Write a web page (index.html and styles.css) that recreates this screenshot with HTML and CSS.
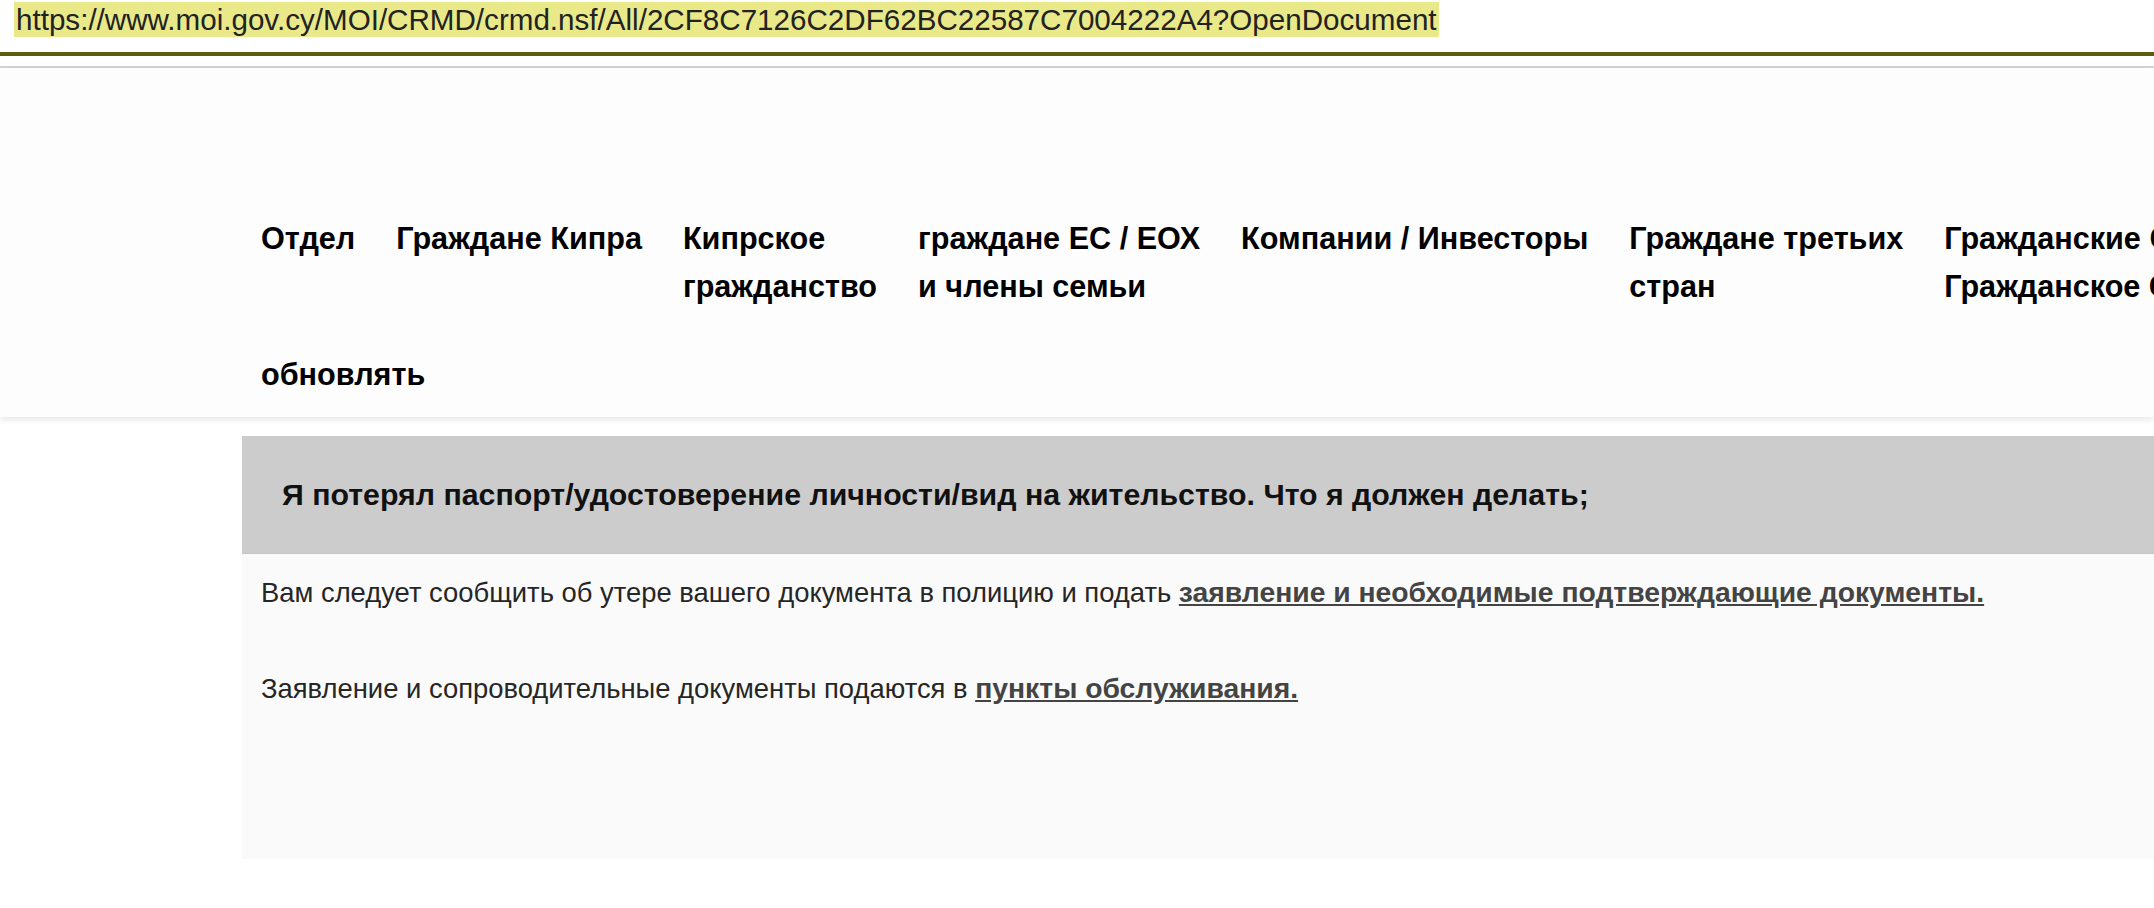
FILE: index.html
```html
<!DOCTYPE html>
<html lang="ru">
<head>
<meta charset="utf-8">
<title>moi.gov.cy</title>
<link rel="stylesheet" href="styles.css">
</head>
<body>
<div class="urlbar"><span class="url">https://www.moi.gov.cy/MOI/CRMD/crmd.nsf/All/2CF8C7126C2DF62BC22587C7004222A4?OpenDocument</span></div>
<div class="rule-olive"></div>
<div class="rule-gray"></div>
<header class="site-header">
  <nav class="nav">
    <ul class="nav-row">
      <li class="nav-item">Отдел</li>
      <li class="nav-item">Граждане Кипра</li>
      <li class="nav-item">Кипрское<br>гражданство</li>
      <li class="nav-item">граждане ЕС / ЕОХ<br>и члены семьи</li>
      <li class="nav-item">Компании / Инвесторы</li>
      <li class="nav-item">Граждане третьих<br>стран</li>
      <li class="nav-item">Гражданские Союзы /<br>Гражданское Состояние</li>
    </ul>
    <ul class="nav-row">
      <li class="nav-item">обновлять</li>
    </ul>
  </nav>
</header>
<main class="content">
  <div class="question">
    <h1 class="question-title">Я потерял паспорт/удостоверение личности/вид на жительство. Что я должен делать;</h1>
  </div>
  <div class="answer">
    <p>Вам следует сообщить об утере вашего документа в полицию и подать <a href="#">заявление и необходимые подтверждающие документы.</a></p>
    <p>Заявление и сопроводительные документы подаются в <a href="#">пункты обслуживания.</a></p>
  </div>
</main>
</body>
</html>
```
FILE: styles.css
```css
html, body {
  margin: 0;
  padding: 0;
  background: #ffffff;
  overflow: hidden;
}
body {
  font-family: "Liberation Sans", Arial, Helvetica, sans-serif;
  color: #111;
  width: 2154px;
}
.urlbar {
  padding: 2px 0 0 14px;
  height: 35px;
}
.url {
  display: inline-block;
  background: #e9e98a;
  color: #222;
  font-size: 29.6px;
  line-height: 35px;
  padding: 0 2px;
  white-space: nowrap;
}
.rule-olive {
  margin-top: 15px;
  height: 4px;
  background: #5e5c10;
}
.rule-gray {
  margin-top: 10px;
  height: 2px;
  background: #d2d2d2;
}
.site-header {
  background: #fdfdfe;
  padding: 146px 0 19px 0;
  box-shadow: 0 3px 6px rgba(0, 0, 0, 0.09);
  position: relative;
  z-index: 1;
}
.nav {
  margin-left: 242px;
  padding-left: 19px;
  display: flex;
  flex-direction: column;
  row-gap: 40px;
}
.nav-row {
  list-style: none;
  margin: 0;
  padding: 0;
  display: flex;
  column-gap: 41px;
  white-space: nowrap;
}
.nav-item {
  font-weight: bold;
  font-size: 30.6px;
  line-height: 48px;
  color: #000;
}
.content {
  margin: 19px 0 0 242px;
  width: 2000px;
}
.question {
  background: #cccccc;
  border-bottom: 1px solid #c5c5c5;
  height: 117px;
  display: flex;
  align-items: center;
  padding-left: 40px;
}
.question-title {
  margin: 0;
  font-size: 30.3px;
  font-weight: bold;
  color: #111;
  line-height: 40px;
}
.answer {
  background: #fafafa;
  height: 287px;
  padding: 18px 0 0 19px;
}
.answer p {
  margin: 0 0 55px 0;
  font-size: 27.4px;
  line-height: 40px;
  color: #262626;
}
.answer a {
  color: #444;
  font-weight: bold;
  font-size: 28.3px;
  text-decoration: underline;
}
```
